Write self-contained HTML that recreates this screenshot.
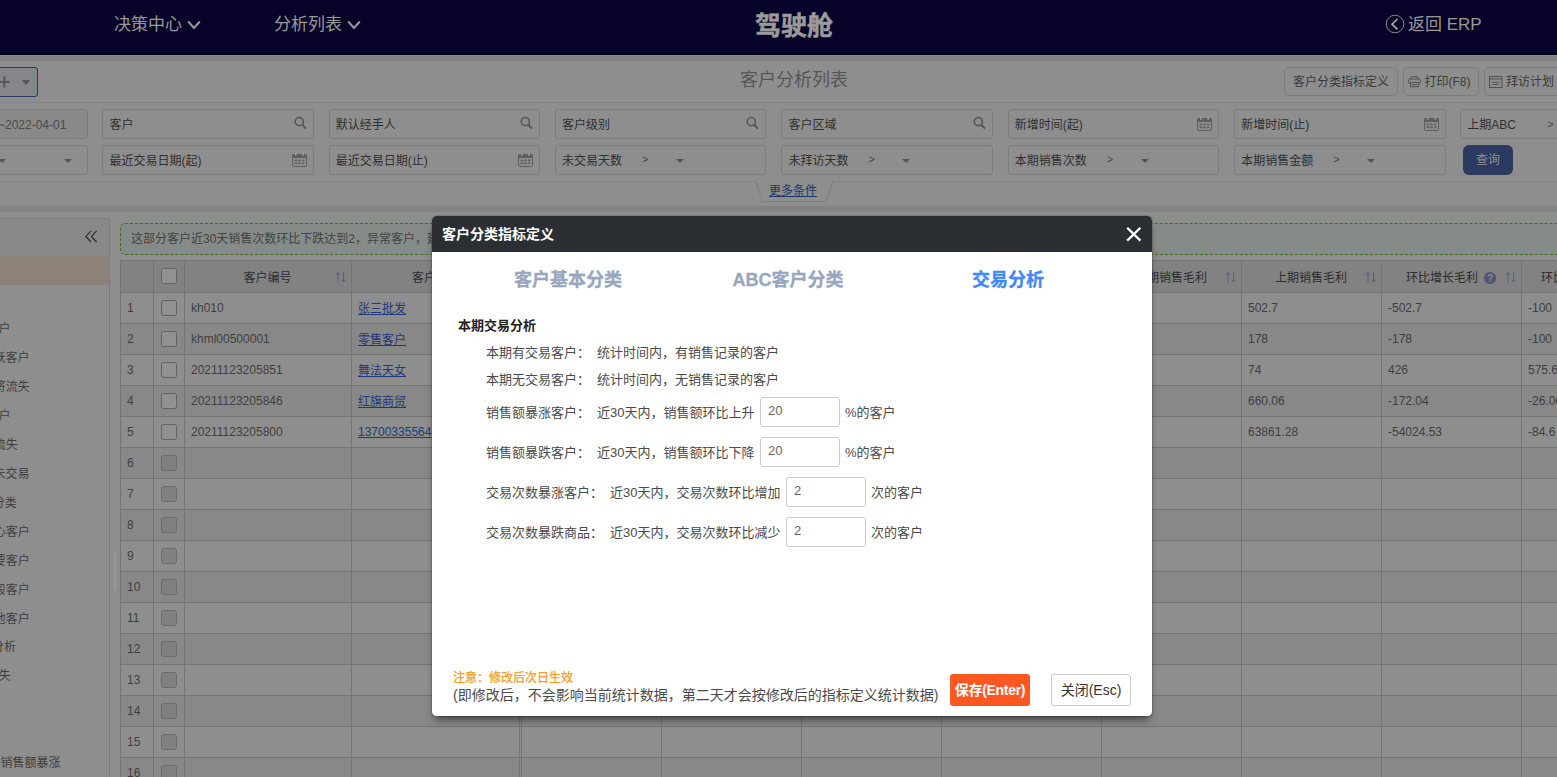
<!DOCTYPE html>
<html lang="zh-CN"><head><meta charset="utf-8"><title>客户分析列表</title>
<style>
*{box-sizing:border-box}
html,body{margin:0;padding:0}
body{width:1557px;height:777px;overflow:hidden;position:relative;background:#8e8e8e;
 font-family:"Liberation Sans","Noto Sans CJK SC",sans-serif;font-size:12px;color:#3d3d3d}
.abs{position:absolute}
#nav{position:absolute;left:0;top:0;width:1557px;height:55px;background:#080328;color:#999}
#nav .mi{position:absolute;top:0;height:55px;line-height:50px;font-size:17px;white-space:nowrap}
#nav .ttl{position:absolute;left:694px;width:200px;top:0;height:55px;line-height:52px;text-align:center;font-size:26px;font-weight:bold;color:#9a9a9a;-webkit-text-stroke:0.5px #9a9a9a}
.band{position:absolute;left:0;width:1557px;height:6px;background:#838383}
.hline{position:absolute;left:0;width:1557px;height:1px;background:#828282}
.pgttl{position:absolute;left:594px;width:400px;top:61px;height:41px;line-height:39.5px;text-align:center;font-size:18px;color:#565656}
.tbtn{position:absolute;top:67px;height:29px;border:1px solid #7d7d7d;border-radius:5px;line-height:29px;font-size:12px;color:#3a3a3a;white-space:nowrap;padding-left:8px}
.fi{position:absolute;height:30px;border:1px solid #7c7c7c;border-radius:3px;line-height:30px;padding-left:6px;font-size:12px;color:#2f2f2f;white-space:nowrap;overflow:hidden}
.fi svg{position:absolute}
.car{position:absolute;width:0;height:0;border-left:4px solid transparent;border-right:4px solid transparent;border-top:4px solid #555}
.gt{position:absolute;font-size:11px;color:#444}
#side{position:absolute;left:-1px;top:218px;width:111px;height:600px;border:1px solid #7a7a83;overflow:hidden}
#side .hd{position:absolute;left:0;top:0;width:110px;height:37px;background:#898989}
#side .sel{position:absolute;left:0;top:37px;width:109px;height:29px;background:#8c8278}
#side .it{position:absolute;left:-100px;height:20px;line-height:20px;text-align:right;font-size:12px;color:#3d3d3d;white-space:nowrap}
#alert{position:absolute;left:120px;top:223px;width:1500px;height:32px;border:1px dashed #3d6e26;border-radius:5px;background:#858c87;line-height:30px;padding-left:10px;color:#424242;font-size:12px;white-space:nowrap}
#grid{position:absolute;left:120px;top:260px;width:1460px;height:530px;background:#8e8e8e;overflow:hidden}
#grid .hdr{position:absolute;left:0;top:0;width:1460px;height:33px;background:#828282}
#grid .row{position:absolute;left:0;width:1460px;height:31px}
#grid .row.d{background:#888888}
#grid .vl{position:absolute;top:0;width:1px;height:530px;background:#747474}
#grid .hl{position:absolute;left:0;width:1460px;height:1px;background:#747474}
#grid .th{position:absolute;top:0;height:33px;line-height:36px;text-align:center;font-size:12px;color:#2c2c2c;white-space:nowrap}
#grid .td{position:absolute;height:31px;line-height:30px;font-size:12px;color:#3f3f3f;white-space:nowrap}
#grid .lk{color:#20397a;text-decoration:underline}
#grid .cj{line-height:33px}
.cb{position:absolute;width:16px;height:16px;border:1px solid #626262;border-radius:2.5px;background:#919191}
.cb.dis{background:#808080;border-color:#6c6c6c}
.srt{position:absolute;top:10px;width:12px;height:14px}
#modal{position:absolute;left:432px;top:216px;width:720px;height:500px;background:#fff;border-radius:4.5px;box-shadow:0 0 0 1px rgba(0,0,0,.13),0 6px 9px -3px rgba(0,0,0,.6);overflow:hidden;color:#444}
#modal .mh{position:absolute;left:0;top:0;width:720px;height:36px;background:#2b2f33;color:#fff;font-size:14px;font-weight:bold;line-height:37.5px;padding-left:10px}
#modal .tab{position:absolute;top:44px;width:220px;height:40px;line-height:40.4px;text-align:center;font-size:18px;font-weight:bold;color:#98a6be;-webkit-text-stroke:0.3px #98a6be}
#modal .tab.on{color:#4189f7;-webkit-text-stroke:0.3px #4189f7}
#modal .sec{position:absolute;left:26px;top:100px;font-size:13px;font-weight:bold;color:#222;line-height:20px}
#modal .r{position:absolute;left:54px;height:20px;line-height:20px;font-size:13px;white-space:nowrap;color:#4a4a4a}
#modal .r span.v{margin-left:7px}
#modal .inp{position:absolute;width:80px;height:30px;border:1px solid #ccc;border-radius:3px;line-height:26px;padding-left:7px;font-size:13px;color:#666;background:#fff}
#modal .sfx{position:absolute;height:20px;line-height:20px;font-size:13px;white-space:nowrap;color:#4a4a4a}
#modal .note{position:absolute;left:21px;top:453.4px;font-size:12px;line-height:18px;color:#f59a1c;white-space:nowrap;-webkit-text-stroke:0.25px #f59a1c}
#modal .note2{position:absolute;left:21px;top:469px;font-size:14px;line-height:20px;color:#4a4a4a;white-space:nowrap}
#modal .bsave{position:absolute;left:518px;top:458px;width:80px;height:32px;border-radius:3px;background:#ff5722;color:#fff;font-weight:bold;font-size:14px;line-height:32px;text-align:center;letter-spacing:-0.3px}
#modal .bclose{position:absolute;left:619px;top:458px;width:80px;height:32px;border-radius:3px;background:#fff;border:1px solid #ccc;color:#333;font-size:14px;line-height:31px;text-align:center}
</style></head><body>

<div id="nav">
<div class="mi" style="left:114px">决策中心</div>
<svg class="abs" style="left:186px;top:19px" width="16" height="13" viewBox="0 0 16 13"><path d="M2.2 2.5 L8 9 L13.8 2.5" fill="none" stroke="#999" stroke-width="2"/></svg>
<div class="mi" style="left:274px">分析列表</div>
<svg class="abs" style="left:346px;top:19px" width="16" height="13" viewBox="0 0 16 13"><path d="M2.2 2.5 L8 9 L13.8 2.5" fill="none" stroke="#999" stroke-width="2"/></svg>
<div class="ttl">驾驶舱</div>
<svg class="abs" style="left:1385px;top:14px" width="20" height="20" viewBox="0 0 20 20"><circle cx="10" cy="10" r="8.8" fill="none" stroke="#858585" stroke-width="1"/><path d="M12.5 5 L7 10.2 L12.5 15.4" fill="none" stroke="#aaa" stroke-width="1.6"/></svg>
<div class="mi" style="left:1408px">返回 ERP</div>
</div>
<div class="band" style="top:56px;height:5px"></div>
<div class="abs" style="left:0;top:55px;width:1557px;height:1px;background:#8b8b8b"></div>
<div class="abs" style="left:0;top:54px;width:1557px;height:1px;background:#03001e"></div>
<div class="band" style="top:206px"></div>
<div class="hline" style="top:102px"></div>
<div class="hline" style="top:181px"></div>
<div class="pgttl">客户分析列表</div>
<div class="abs" style="left:-40px;top:67px;width:78px;height:30px;border:1px solid #263a6c;border-radius:3px;background:#85868a"></div>
<svg class="abs" style="left:-1px;top:76px" width="12" height="12" viewBox="0 0 12 12"><path d="M0 6H10.6M5.3 0.6V11.4" stroke="#555" stroke-width="1.9" fill="none"/></svg>
<div class="car" style="left:22px;top:80px;border-left-width:4.7px;border-right-width:4.7px;border-top-width:5.2px"></div>
<div class="tbtn" style="left:1284px;width:114px">客户分类指标定义</div>
<div class="tbtn" style="left:1403px;width:76px;padding-left:20.5px">打印(F8)<svg class="abs" style="left:3.6px;top:8px" width="13" height="12" viewBox="0 0 13 12"><g fill="none" stroke="#505050" stroke-width="1"><path d="M3.2 3.2V1.2Q3.2 0.6 3.8 0.6H9.2Q9.8 0.6 9.8 1.2V3.2"/><rect x="0.6" y="3" width="11.8" height="4.6" rx="1.8"/><rect x="2.6" y="6.4" width="7.8" height="4.3" fill="#8e8e8e"/><path d="M4 8.6h5"/></g></svg></div>
<div class="tbtn" style="left:1484px;width:90px;padding-left:21px">拜访计划<svg class="abs" style="left:4px;top:8px" width="14" height="13" viewBox="0 0 14 13"><g fill="none" stroke="#505050" stroke-width="1"><rect x="0.5" y="0.5" width="12.4" height="11"/><path d="M0.5 2.9h12.4M3.3 6.3h7.2M3.3 8.6h6.4"/></g></svg></div>
<div class="fi" style="left:102.4px;top:109px;width:211.4px">客户<svg style="right:6px;top:6px" width="13" height="14" viewBox="0 0 13 14"><circle cx="5.3" cy="5.6" r="4.1" fill="none" stroke="#575757" stroke-width="1.6"/><path d="M8.3 8.8L12 12.6" stroke="#575757" stroke-width="2"/></svg></div>
<div class="fi" style="left:328.7px;top:109px;width:211.4px">默认经手人<svg style="right:6px;top:6px" width="13" height="14" viewBox="0 0 13 14"><circle cx="5.3" cy="5.6" r="4.1" fill="none" stroke="#575757" stroke-width="1.6"/><path d="M8.3 8.8L12 12.6" stroke="#575757" stroke-width="2"/></svg></div>
<div class="fi" style="left:555.0px;top:109px;width:211.4px">客户级别<svg style="right:6px;top:6px" width="13" height="14" viewBox="0 0 13 14"><circle cx="5.3" cy="5.6" r="4.1" fill="none" stroke="#575757" stroke-width="1.6"/><path d="M8.3 8.8L12 12.6" stroke="#575757" stroke-width="2"/></svg></div>
<div class="fi" style="left:781.4px;top:109px;width:211.4px">客户区域<svg style="right:6px;top:6px" width="13" height="14" viewBox="0 0 13 14"><circle cx="5.3" cy="5.6" r="4.1" fill="none" stroke="#575757" stroke-width="1.6"/><path d="M8.3 8.8L12 12.6" stroke="#575757" stroke-width="2"/></svg></div>
<div class="fi" style="left:1007.8px;top:109px;width:211.4px">新增时间(起)<svg style="right:6px;top:7px" width="15" height="14" viewBox="0 0 15 14"><rect x="0.5" y="1.5" width="14" height="12" rx="1.2" fill="none" stroke="#5e5e5e"/><rect x="0.5" y="1.5" width="14" height="3.5" fill="#5e5e5e"/><rect x="3.1" y="0" width="1.4" height="2.8" fill="#a0a0a0"/><rect x="10.5" y="0" width="1.4" height="2.8" fill="#a0a0a0"/><g fill="#606060"><rect x="2.6" y="6.6" width="2.8" height="1.6"/><rect x="6.3" y="6.6" width="2.5" height="1.6"/><rect x="9.9" y="6.6" width="2.4" height="1.6"/><rect x="2.6" y="9.4" width="2.8" height="1.8"/><rect x="6.3" y="9.4" width="2.5" height="1.8"/><rect x="9.9" y="9.4" width="2.4" height="1.8"/></g></svg></div>
<div class="fi" style="left:1234.2px;top:109px;width:211.4px">新增时间(止)<svg style="right:6px;top:7px" width="15" height="14" viewBox="0 0 15 14"><rect x="0.5" y="1.5" width="14" height="12" rx="1.2" fill="none" stroke="#5e5e5e"/><rect x="0.5" y="1.5" width="14" height="3.5" fill="#5e5e5e"/><rect x="3.1" y="0" width="1.4" height="2.8" fill="#a0a0a0"/><rect x="10.5" y="0" width="1.4" height="2.8" fill="#a0a0a0"/><g fill="#606060"><rect x="2.6" y="6.6" width="2.8" height="1.6"/><rect x="6.3" y="6.6" width="2.5" height="1.6"/><rect x="9.9" y="6.6" width="2.4" height="1.6"/><rect x="2.6" y="9.4" width="2.8" height="1.8"/><rect x="6.3" y="9.4" width="2.5" height="1.8"/><rect x="9.9" y="9.4" width="2.4" height="1.8"/></g></svg></div>
<div class="fi" style="left:1460.3px;top:109px;width:211.4px">上期ABC<span class="gt" style="left:86px;top:-1px">&gt;</span></div>
<div class="fi" style="left:-123px;top:109px;width:211.4px;background:#898989;color:#4b4b4b;text-align:right;padding-right:21px">2022-03-03~2022-04-01</div>
<div class="fi" style="left:102.4px;top:145px;width:211.4px">最近交易日期(起)<svg style="right:6px;top:7px" width="15" height="14" viewBox="0 0 15 14"><rect x="0.5" y="1.5" width="14" height="12" rx="1.2" fill="none" stroke="#5e5e5e"/><rect x="0.5" y="1.5" width="14" height="3.5" fill="#5e5e5e"/><rect x="3.1" y="0" width="1.4" height="2.8" fill="#a0a0a0"/><rect x="10.5" y="0" width="1.4" height="2.8" fill="#a0a0a0"/><g fill="#606060"><rect x="2.6" y="6.6" width="2.8" height="1.6"/><rect x="6.3" y="6.6" width="2.5" height="1.6"/><rect x="9.9" y="6.6" width="2.4" height="1.6"/><rect x="2.6" y="9.4" width="2.8" height="1.8"/><rect x="6.3" y="9.4" width="2.5" height="1.8"/><rect x="9.9" y="9.4" width="2.4" height="1.8"/></g></svg></div>
<div class="fi" style="left:328.7px;top:145px;width:211.4px">最近交易日期(止)<svg style="right:6px;top:7px" width="15" height="14" viewBox="0 0 15 14"><rect x="0.5" y="1.5" width="14" height="12" rx="1.2" fill="none" stroke="#5e5e5e"/><rect x="0.5" y="1.5" width="14" height="3.5" fill="#5e5e5e"/><rect x="3.1" y="0" width="1.4" height="2.8" fill="#a0a0a0"/><rect x="10.5" y="0" width="1.4" height="2.8" fill="#a0a0a0"/><g fill="#606060"><rect x="2.6" y="6.6" width="2.8" height="1.6"/><rect x="6.3" y="6.6" width="2.5" height="1.6"/><rect x="9.9" y="6.6" width="2.4" height="1.6"/><rect x="2.6" y="9.4" width="2.8" height="1.8"/><rect x="6.3" y="9.4" width="2.5" height="1.8"/><rect x="9.9" y="9.4" width="2.4" height="1.8"/></g></svg></div>
<div class="fi" style="left:555.0px;top:145px;width:211.4px">未交易天数<span class="gt" style="left:86px;top:-2px">&gt;</span><span class="car" style="left:120px;top:13px"></span></div>
<div class="fi" style="left:781.4px;top:145px;width:211.4px">未拜访天数<span class="gt" style="left:86px;top:-2px">&gt;</span><span class="car" style="left:120px;top:13px"></span></div>
<div class="fi" style="left:1007.8px;top:145px;width:211.4px">本期销售次数<span class="gt" style="left:98px;top:-2px">&gt;</span><span class="car" style="left:132px;top:13px"></span></div>
<div class="fi" style="left:1234.2px;top:145px;width:211.4px">本期销售金额<span class="gt" style="left:98px;top:-2px">&gt;</span><span class="car" style="left:132px;top:13px"></span></div>
<div class="fi" style="left:-123px;top:145px;width:211.4px"><span class="car" style="left:186px;top:13px"></span><span class="car" style="left:120px;top:13px"></span></div>
<div class="abs" style="left:1463px;top:145px;width:50px;height:30px;border-radius:6px;background:#2a3a60;color:#8f8f8f;font-size:12px;line-height:31px;text-align:center">查询</div>
<svg class="abs" style="left:750px;top:181px" width="90" height="22" viewBox="0 0 90 22"><path d="M6 0.5 L12.5 20.5 L75.5 20.5 L83 0.5" fill="#8e8e8e" stroke="#7d7d7d" stroke-width="1"/><path d="M7 0.5H82" stroke="#8e8e8e" stroke-width="1.4"/></svg>
<div class="abs" style="left:743px;top:181px;width:100px;height:20px;line-height:20.5px;text-align:center;font-size:12px;color:#203464;text-decoration:underline">更多条件</div>
<div id="side"><div class="hd"></div><div class="sel"></div>
<svg class="abs" style="left:85.4px;top:11.4px" width="13" height="13" viewBox="0 0 13 13"><path d="M6 0.8L0.9 6.4L6 12M11.6 0.8L6.5 6.4L11.6 12" fill="none" stroke="#2a2a2a" stroke-width="1.15"/></svg>
<div class="it" style="width:110.5px;top:99.5px">全部客户</div>
<div class="it" style="width:129.6px;top:129.0px">活跃客户</div>
<div class="it" style="width:129.8px;top:158.0px">即将流失</div>
<div class="it" style="width:110.5px;top:186.5px">沉睡客户</div>
<div class="it" style="width:117.8px;top:215.5px">已流失</div>
<div class="it" style="width:129.6px;top:244.5px">从未交易</div>
<div class="it" style="width:116.7px;top:273.5px">ABC分类</div>
<div class="it" style="width:129.8px;top:302.5px">核心客户</div>
<div class="it" style="width:129.8px;top:331.5px">重要客户</div>
<div class="it" style="width:129.8px;top:360.5px">一般客户</div>
<div class="it" style="width:129.8px;top:389.5px">其他客户</div>
<div class="it" style="width:116.0px;top:418.0px">交易分析</div>
<div class="it" style="width:110.7px;top:446.5px">客户流失</div>
<div class="it" style="width:160.6px;top:534.0px">本期销售额暴涨</div>
</div>
<div class="abs" style="left:114px;top:551px;width:2px;height:39px;background:#9a9a9a"></div>
<div id="alert">这部分客户近30天销售次数环比下跌达到2，异常客户，建议重点跟进回访，了解客户下跌原因并及时采取措施</div>
<div id="grid"><div class="hdr"></div>
<div class="row" style="top:33px"></div>
<div class="row d" style="top:64px"></div>
<div class="row" style="top:95px"></div>
<div class="row d" style="top:126px"></div>
<div class="row" style="top:157px"></div>
<div class="row d" style="top:188px"></div>
<div class="row" style="top:219px"></div>
<div class="row d" style="top:250px"></div>
<div class="row" style="top:281px"></div>
<div class="row d" style="top:312px"></div>
<div class="row" style="top:343px"></div>
<div class="row d" style="top:374px"></div>
<div class="row" style="top:405px"></div>
<div class="row d" style="top:436px"></div>
<div class="row" style="top:467px"></div>
<div class="row d" style="top:498px"></div>
<div class="row" style="top:529px"></div>
<div class="vl" style="left:0px"></div>
<div class="vl" style="left:33px"></div>
<div class="vl" style="left:64px"></div>
<div class="vl" style="left:231px"></div>
<div class="vl" style="left:401px"></div>
<div class="vl" style="left:541px"></div>
<div class="vl" style="left:681px"></div>
<div class="vl" style="left:821px"></div>
<div class="vl" style="left:981px"></div>
<div class="vl" style="left:1121px"></div>
<div class="vl" style="left:1261px"></div>
<div class="vl" style="left:1401px"></div>
<div class="vl" style="left:399px"></div>
<div class="hl" style="top:0"></div>
<div class="hl" style="top:32px"></div>
<div class="hl" style="top:63px"></div>
<div class="hl" style="top:94px"></div>
<div class="hl" style="top:125px"></div>
<div class="hl" style="top:156px"></div>
<div class="hl" style="top:187px"></div>
<div class="hl" style="top:218px"></div>
<div class="hl" style="top:249px"></div>
<div class="hl" style="top:280px"></div>
<div class="hl" style="top:311px"></div>
<div class="hl" style="top:342px"></div>
<div class="hl" style="top:373px"></div>
<div class="hl" style="top:404px"></div>
<div class="hl" style="top:435px"></div>
<div class="hl" style="top:466px"></div>
<div class="hl" style="top:497px"></div>
<div class="hl" style="top:528px"></div>
<div class="hl" style="top:559px"></div>
<div class="th" style="left:64px;width:167px">客户编号</div>
<svg class="srt" style="left:215px" viewBox="0 0 12 14"><g fill="none" stroke="#555d80" stroke-width="1"><path d="M3 12.5V2.5M0.8 5L3 2.5L5.2 5"/><path d="M8.6 2V12M6.4 9.6L8.6 12L10.8 9.6"/></g></svg>
<div class="th" style="left:231px;width:170px">客户名称</div>
<svg class="srt" style="left:385px" viewBox="0 0 12 14"><g fill="none" stroke="#555d80" stroke-width="1"><path d="M3 12.5V2.5M0.8 5L3 2.5L5.2 5"/><path d="M8.6 2V12M6.4 9.6L8.6 12L10.8 9.6"/></g></svg>
<div class="th" style="left:401px;width:140px">本期销售金额</div>
<svg class="srt" style="left:525px" viewBox="0 0 12 14"><g fill="none" stroke="#555d80" stroke-width="1"><path d="M3 12.5V2.5M0.8 5L3 2.5L5.2 5"/><path d="M8.6 2V12M6.4 9.6L8.6 12L10.8 9.6"/></g></svg>
<div class="th" style="left:541px;width:140px">上期销售金额</div>
<svg class="srt" style="left:665px" viewBox="0 0 12 14"><g fill="none" stroke="#555d80" stroke-width="1"><path d="M3 12.5V2.5M0.8 5L3 2.5L5.2 5"/><path d="M8.6 2V12M6.4 9.6L8.6 12L10.8 9.6"/></g></svg>
<div class="th" style="left:681px;width:140px">环比增长金额</div>
<svg class="srt" style="left:805px" viewBox="0 0 12 14"><g fill="none" stroke="#555d80" stroke-width="1"><path d="M3 12.5V2.5M0.8 5L3 2.5L5.2 5"/><path d="M8.6 2V12M6.4 9.6L8.6 12L10.8 9.6"/></g></svg>
<div class="th" style="left:821px;width:160px">环比增长率(%)</div>
<svg class="srt" style="left:965px" viewBox="0 0 12 14"><g fill="none" stroke="#555d80" stroke-width="1"><path d="M3 12.5V2.5M0.8 5L3 2.5L5.2 5"/><path d="M8.6 2V12M6.4 9.6L8.6 12L10.8 9.6"/></g></svg>
<div class="th" style="left:981px;width:140px">本期销售毛利</div>
<svg class="srt" style="left:1105px" viewBox="0 0 12 14"><g fill="none" stroke="#555d80" stroke-width="1"><path d="M3 12.5V2.5M0.8 5L3 2.5L5.2 5"/><path d="M8.6 2V12M6.4 9.6L8.6 12L10.8 9.6"/></g></svg>
<div class="th" style="left:1121px;width:140px">上期销售毛利</div>
<svg class="srt" style="left:1245px" viewBox="0 0 12 14"><g fill="none" stroke="#555d80" stroke-width="1"><path d="M3 12.5V2.5M0.8 5L3 2.5L5.2 5"/><path d="M8.6 2V12M6.4 9.6L8.6 12L10.8 9.6"/></g></svg>
<div class="th" style="left:1261px;width:140px;padding-right:0">环比增长毛利<svg style="display:inline-block;vertical-align:-2px;margin-left:6px;margin-right:0px" width="12" height="12" viewBox="0 0 12 12"><circle cx="6" cy="6" r="6" fill="#4e5473"/><text x="6" y="9.6" font-size="10" font-weight="bold" text-anchor="middle" fill="#8e8e8e" font-family="Liberation Sans,sans-serif">?</text></svg></div>
<svg class="srt" style="left:1385px" viewBox="0 0 12 14"><g fill="none" stroke="#555d80" stroke-width="1"><path d="M3 12.5V2.5M0.8 5L3 2.5L5.2 5"/><path d="M8.6 2V12M6.4 9.6L8.6 12L10.8 9.6"/></g></svg>
<div class="th" style="left:1401px;width:140px;text-align:left;padding-left:20px">环比增长毛利率(%)</div>
<div class="cb" style="left:41px;top:8px"></div>
<div class="td" style="left:7px;top:33px">1</div>
<div class="cb" style="left:41px;top:40px"></div>
<div class="td" style="left:71px;top:33px">kh010</div>
<div class="td lk cj" style="left:238px;top:33px">张三批发</div>
<div class="td" style="left:1128px;top:33px">502.7</div>
<div class="td" style="left:1268px;top:33px">-502.7</div>
<div class="td" style="left:1408px;top:33px">-100</div>
<div class="td" style="left:7px;top:64px">2</div>
<div class="cb" style="left:41px;top:71px"></div>
<div class="td" style="left:71px;top:64px">khml00500001</div>
<div class="td lk cj" style="left:238px;top:64px">零售客户</div>
<div class="td" style="left:1128px;top:64px">178</div>
<div class="td" style="left:1268px;top:64px">-178</div>
<div class="td" style="left:1408px;top:64px">-100</div>
<div class="td" style="left:7px;top:95px">3</div>
<div class="cb" style="left:41px;top:102px"></div>
<div class="td" style="left:71px;top:95px">20211123205851</div>
<div class="td lk cj" style="left:238px;top:95px">舞法天女</div>
<div class="td" style="left:1128px;top:95px">74</div>
<div class="td" style="left:1268px;top:95px">426</div>
<div class="td" style="left:1408px;top:95px">575.68</div>
<div class="td" style="left:7px;top:126px">4</div>
<div class="cb" style="left:41px;top:133px"></div>
<div class="td" style="left:71px;top:126px">20211123205846</div>
<div class="td lk cj" style="left:238px;top:126px">红旗商贸</div>
<div class="td" style="left:1128px;top:126px">660.06</div>
<div class="td" style="left:1268px;top:126px">-172.04</div>
<div class="td" style="left:1408px;top:126px">-26.06</div>
<div class="td" style="left:7px;top:157px">5</div>
<div class="cb" style="left:41px;top:164px"></div>
<div class="td" style="left:71px;top:157px">20211123205800</div>
<div class="td lk" style="left:238px;top:157px">13700335564</div>
<div class="td" style="left:1128px;top:157px">63861.28</div>
<div class="td" style="left:1268px;top:157px">-54024.53</div>
<div class="td" style="left:1408px;top:157px">-84.6</div>
<div class="td" style="left:7px;top:188px">6</div>
<div class="cb dis" style="left:41px;top:195px"></div>
<div class="td" style="left:7px;top:219px">7</div>
<div class="cb dis" style="left:41px;top:226px"></div>
<div class="td" style="left:7px;top:250px">8</div>
<div class="cb dis" style="left:41px;top:257px"></div>
<div class="td" style="left:7px;top:281px">9</div>
<div class="cb dis" style="left:41px;top:288px"></div>
<div class="td" style="left:7px;top:312px">10</div>
<div class="cb dis" style="left:41px;top:319px"></div>
<div class="td" style="left:7px;top:343px">11</div>
<div class="cb dis" style="left:41px;top:350px"></div>
<div class="td" style="left:7px;top:374px">12</div>
<div class="cb dis" style="left:41px;top:381px"></div>
<div class="td" style="left:7px;top:405px">13</div>
<div class="cb dis" style="left:41px;top:412px"></div>
<div class="td" style="left:7px;top:436px">14</div>
<div class="cb dis" style="left:41px;top:443px"></div>
<div class="td" style="left:7px;top:467px">15</div>
<div class="cb dis" style="left:41px;top:474px"></div>
<div class="td" style="left:7px;top:498px">16</div>
<div class="cb dis" style="left:41px;top:505px"></div>
<div class="td" style="left:7px;top:529px">17</div>
<div class="cb dis" style="left:41px;top:536px"></div>
</div>
<div id="modal"><div class="mh">客户分类指标定义</div>
<svg class="abs" style="left:693px;top:10px" width="17" height="17" viewBox="0 0 17 17"><path d="M2.2 1.7L15.4 14.6M15.4 1.7L2.2 14.6" stroke="#fff" stroke-width="2.3" fill="none"/></svg>
<div class="tab" style="left:26px">客户基本分类</div><div class="tab" style="left:246px">ABC客户分类</div><div class="tab on" style="left:466px">交易分析</div>
<div class="sec">本期交易分析</div>
<div class="r" style="top:126.7px">本期有交易客户：<span class="v">统计时间内，有销售记录的客户</span></div>
<div class="r" style="top:153.9px">本期无交易客户：<span class="v">统计时间内，无销售记录的客户</span></div>
<div class="r" style="top:187.3px">销售额暴涨客户：<span class="v">近30天内，销售额环比上升</span></div>
<div class="r" style="top:227.3px">销售额暴跌客户：<span class="v">近30天内，销售额环比下降</span></div>
<div class="r" style="top:267.3px">交易次数暴涨客户：<span class="v">近30天内，交易次数环比增加</span></div>
<div class="r" style="top:307.3px">交易次数暴跌商品：<span class="v">近30天内，交易次数环比减少</span></div>
<div class="inp" style="left:328px;top:181px">20</div>
<div class="sfx" style="left:413px;top:187px">%的客户</div>
<div class="inp" style="left:328px;top:221px">20</div>
<div class="sfx" style="left:413px;top:227px">%的客户</div>
<div class="inp" style="left:354px;top:261px">2</div>
<div class="sfx" style="left:439px;top:267px">次的客户</div>
<div class="inp" style="left:354px;top:301px">2</div>
<div class="sfx" style="left:439px;top:307px">次的客户</div>
<div class="note">注意：修改后次日生效</div>
<div class="note2">(即修改后，不会影响当前统计数据，第二天才会按修改后的指标定义统计数据)</div>
<div class="bsave">保存(Enter)</div><div class="bclose">关闭(Esc)</div>
</div>
</body></html>
